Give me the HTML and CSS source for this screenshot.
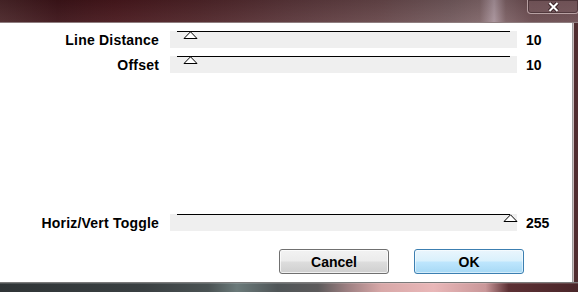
FILE: index.html
```html
<!DOCTYPE html>
<html lang="en">
<head>
    <meta charset="UTF-8">
    <title>Filter Settings</title>
    <link rel="stylesheet" href="styles.css">
</head>
<body>
    <div class="window">
        <!-- Title bar with close button -->
        <div class="titlebar">
            <div class="close-btn">
                <svg width="11" height="10" viewBox="0 0 11 10">
                    <path d="M1.5 1 L9.5 9 M9.5 1 L1.5 9" stroke="#3a2226" stroke-width="4"/>
                    <path d="M1.5 1 L9.5 9 M9.5 1 L1.5 9" stroke="#ffffff" stroke-width="2"/>
                </svg>
            </div>
        </div>

        <div class="middle">
            <!-- Dialog client area -->
            <div class="client">
                <div class="slider-row">
                    <div class="label">Line Distance</div>
                    <div class="track">
                        <div class="rail">
                            <span class="thumb" style="left: 13px">
                                <svg width="15" height="8" viewBox="0 0 15 8"><path d="M7.5 0.8 L14 7.5 L1 7.5 Z" fill="#fff" stroke="#000" stroke-width="1"/></svg>
                            </span>
                        </div>
                    </div>
                    <div class="value">10</div>
                </div>

                <div class="slider-row">
                    <div class="label">Offset</div>
                    <div class="track">
                        <div class="rail">
                            <span class="thumb" style="left: 13px">
                                <svg width="15" height="8" viewBox="0 0 15 8"><path d="M7.5 0.8 L14 7.5 L1 7.5 Z" fill="#fff" stroke="#000" stroke-width="1"/></svg>
                            </span>
                        </div>
                    </div>
                    <div class="value">10</div>
                </div>

                <div class="slider-row toggle-row">
                    <div class="label">Horiz/Vert Toggle</div>
                    <div class="track">
                        <div class="rail">
                            <span class="thumb" style="left: 333px">
                                <svg width="15" height="8" viewBox="0 0 15 8"><path d="M7.5 0.8 L14 7.5 L1 7.5 Z" fill="#fff" stroke="#000" stroke-width="1"/></svg>
                            </span>
                        </div>
                    </div>
                    <div class="value">255</div>
                </div>

                <div class="buttons">
                    <button class="btn">Cancel</button>
                    <button class="btn btn-ok">OK</button>
                </div>
            </div>
            <div class="right-frame"></div>
        </div>

        <div class="bottom-frame"></div>
    </div>
</body>
</html>
```

FILE: styles.css
```css
/* Page */
body {
    margin: 0;
    background: #ffffff;
    font-family: "Liberation Sans", Arial, sans-serif;
    overflow: hidden;
}

.window {
    width: 578px;
    height: 292px;
    display: flex;
    flex-direction: column;
}

/* Title Bar */
.titlebar {
    height: 22px;
    flex: none;
    display: flex;
    justify-content: flex-end;
    background:
        linear-gradient(180deg, rgba(0, 0, 0, 0.1), rgba(255, 255, 255, 0.05)),
        linear-gradient(90deg, #4a2629 0%, #3d1419 10%, #48181d 20%, #4f2529 35%, #5a363a 50%, #664649 65%, #735a5d 78%, #7e6467 83%, #a8929a 85.5%, #7c6064 87.5%, #6a4b4f 92%, #6d4e52 100%);
    border-bottom: 1px solid #8e7d7f;
}

.close-btn {
    width: 50px;
    height: 13px;
    margin-right: -1px;
    display: flex;
    justify-content: center;
    align-items: center;
    border: 1px solid rgba(230, 210, 212, 0.6);
    border-top: none;
    border-radius: 0 0 4px 4px;
    background: rgba(130, 100, 104, 0.4);
    box-shadow: inset 0 0 0 1px rgba(40, 20, 24, 0.45);
}

/* Middle */
.middle {
    flex: 1;
    display: flex;
}

.client {
    flex: 1;
    background: #ffffff;
    padding-top: 8px;
    display: flex;
    flex-direction: column;
}

.right-frame {
    width: 5px;
    background: #4f2c2f;
    border-left: 1px solid #9d9d9d;
    box-shadow: inset 1px 0 0 #c8b8ba;
}

.bottom-frame {
    height: 9px;
    flex: none;
    border-top: 1px solid #7a7a7a;
    background: linear-gradient(90deg, #2f3436 0%, #3a4042 25%, #4a5253 36%, #6b7a7a 41%, #4f5557 48%, #5c5a5b 55%, #9c7f81 60%, #d8a8a8 66%, #e9b7b8 75%, #c99799 84%, #5c3034 88%, #4a2629 100%);
    box-shadow: inset 0 1px 0 rgba(255, 255, 255, 0.15);
}

/* Slider Rows */
.slider-row {
    display: flex;
    align-items: center;
    height: 17px;
}

.slider-row + .slider-row {
    margin-top: 8px;
}

.slider-row.toggle-row {
    margin-top: 141px;
}

.label {
    width: 159px;
    text-align: right;
    font-size: 14px;
    font-weight: bold;
    letter-spacing: 0.2px;
    color: #000;
    white-space: nowrap;
}

.track {
    width: 347px;
    height: 17px;
    margin-left: 11px;
    background: #efefef;
    position: relative;
}

.rail {
    position: absolute;
    left: 7px;
    right: 7px;
    top: 0;
    height: 1px;
    background: #000;
}

.thumb {
    position: absolute;
    top: 0;
    width: 15px;
    height: 8px;
    margin-left: -7px;
    display: block;
}

.thumb svg {
    display: block;
}

.value {
    margin-left: 9px;
    font-size: 14px;
    font-weight: bold;
    color: #000;
}

/* Buttons */
.buttons {
    display: flex;
    justify-content: flex-end;
    gap: 25px;
    padding-right: 48px;
    margin-top: 18px;
}

.btn {
    width: 110px;
    height: 25px;
    font-family: "Liberation Sans", Arial, sans-serif;
    font-size: 14px;
    font-weight: bold;
    color: #000;
    border: 1px solid #707070;
    border-radius: 3px;
    background: linear-gradient(180deg, #f2f2f2 0%, #ebebeb 48%, #dddddd 52%, #cfcfcf 100%);
    box-shadow: inset 0 0 0 1px rgba(255, 255, 255, 0.7);
    padding: 0;
}

.btn-ok {
    border-color: #3c7fb1;
    background: linear-gradient(180deg, #eaf6fd 0%, #d9f0fc 48%, #bee6fd 52%, #a7d9f5 100%);
    box-shadow: inset 0 0 0 1px rgba(255, 255, 255, 0.5);
}
```
